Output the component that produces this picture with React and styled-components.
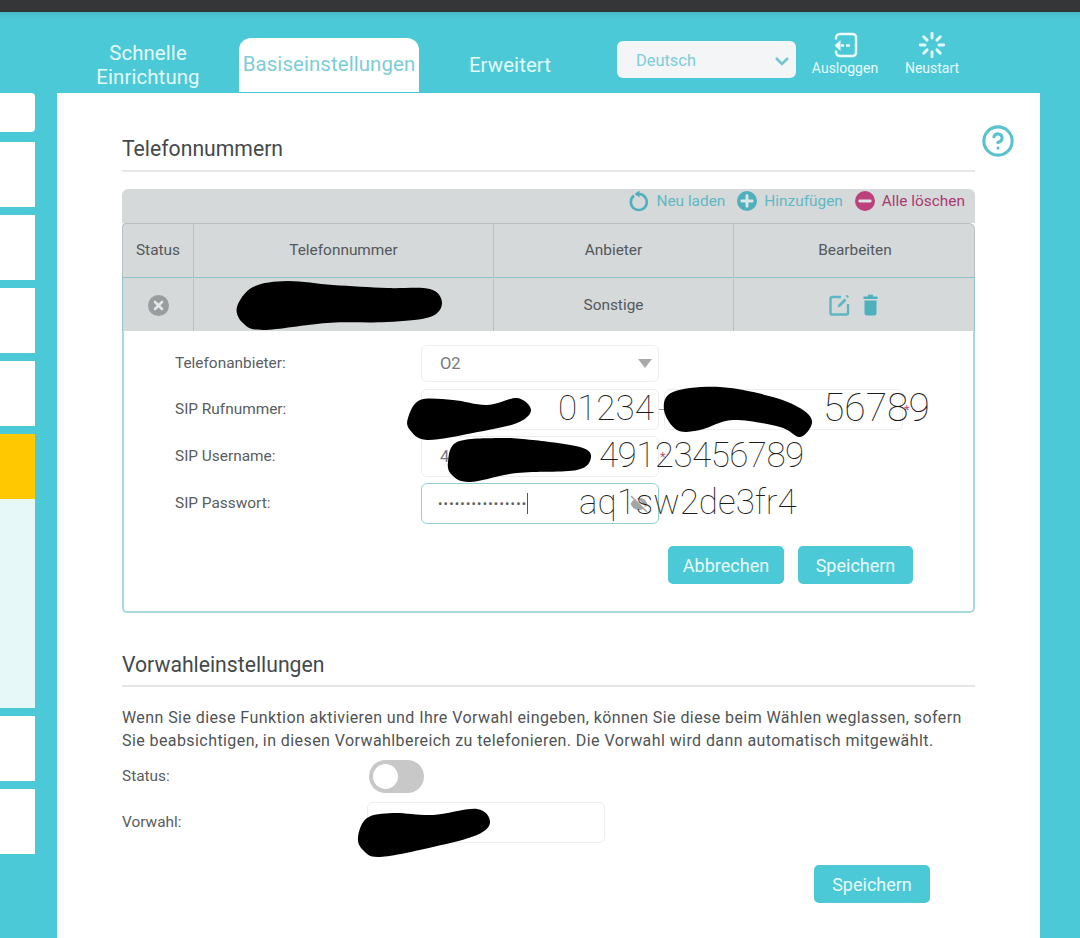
import React from 'react';
import styled, { createGlobalStyle } from 'styled-components';
import { Loader, CircleHelp, EyeOff } from 'lucide-react';

const teal = '#4cc9d6';

const GlobalStyle = createGlobalStyle`
  html, body {
    margin: 0;
    padding: 0;
    height: 938px;
    overflow: hidden;
    background: ${teal};
    font-family: "Roboto", "Liberation Sans", sans-serif;
  }
`;

const Page = styled.div`
  position: relative;
  width: 1080px;
  height: 938px;
  overflow: hidden;
  background: ${teal};
`;

const TopStrip = styled.div`
  height: 12px;
  background: #343638;
`;

const Nav = styled.nav`
  display: flex;
  align-items: flex-end;
  height: 80px;
  padding-left: 88px;
  background: linear-gradient(#46bdca 0, ${teal} 8px);
`;

const NavItem = styled.div`
  width: ${props => props.$width}px;
  margin-right: ${props => props.$after || 0}px;
  height: 54px;
  display: flex;
  align-items: center;
  justify-content: center;
  text-align: center;
  font-size: 20.4px;
  line-height: 24px;
  letter-spacing: 0.1px;
  color: ${props => (props.$active ? '#7ccdd6' : '#e4fafb')};
  background: ${props => (props.$active ? '#fff' : 'transparent')};
  border-radius: ${props => (props.$active ? '12px 12px 0 0' : '0')};
  padding-bottom: ${props => (props.$active ? 2 : 0)}px;
  box-sizing: border-box;
`;

const LanguageSelect = styled.div`
  align-self: flex-start;
  box-sizing: border-box;
  width: 179px;
  height: 37px;
  margin: 29px 4px 0 16px;
  padding: 2px 6px 0 19px;
  display: flex;
  align-items: center;
  justify-content: space-between;
  border-radius: 6px;
  background: #f3f5f6;
  color: #7ccdd6;
  font-size: 16.4px;
`;

const HeaderAction = styled.div`
  align-self: flex-start;
  width: ${props => props.$width}px;
  margin-top: 19px;
  display: flex;
  flex-direction: column;
  align-items: center;
  color: #e8fbfc;
  font-size: 14px;
  line-height: 18px;
  svg { display: block; height: 28px; }
`;

const Body = styled.div`
  display: flex;
  align-items: flex-start;
  column-gap: 22px;
  padding-top: 1px;
`;

const Sidebar = styled.aside`
  width: 35px;
  display: flex;
  flex-direction: column;
  row-gap: 8px;
`;

const SideItem = styled.div`
  height: ${props => props.$height || 65}px;
  background: ${props => props.$color || '#fff'};
  margin-bottom: ${props => props.$after || 0}px;
  border-radius: ${props => props.$radius || 0};
`;

const SideGroup = styled.div`
  display: flex;
  flex-direction: column;
`;

const Panel = styled.main`
  box-sizing: border-box;
  width: 983px;
  height: 845px;
  padding: 0 65px;
  background: #fff;
`;

const SectionTitle = styled.h2`
  box-sizing: border-box;
  height: ${props => props.$height}px;
  margin: 0;
  padding-bottom: ${props => props.$gap}px;
  display: flex;
  align-items: flex-end;
  border-bottom: 2px solid #e6e8e8;
  font-size: 21.2px;
  font-weight: 400;
  line-height: 26px;
  color: #45494c;
`;

const HelpIcon = styled.div`
  position: absolute;
  left: 981px;
  top: 124px;
  color: #58c2cd;
`;

const Toolbar = styled.div`
  margin-top: 17px;
  height: 34px;
  padding: 0 10px 10px 0;
  box-sizing: border-box;
  display: flex;
  align-items: center;
  justify-content: flex-end;
  background: #d5d9da;
  border-radius: 6px 6px 0 0;
`;

const ToolAction = styled.span`
  display: flex;
  align-items: center;
  column-gap: 7px;
  margin-left: 12px;
  font-size: 15.4px;
  color: ${props => props.$color};
`;

const TableRow = styled.div`
  display: grid;
  grid-template-columns: 71px 300px 240px 242px;
  height: 54px;
  box-sizing: border-box;
  padding: ${props => (props.$selected ? '1px 0 0' : '0')};
  background: #d5d9da;
  border-top: 1px solid ${props => (props.$selected ? '#8fc3ca' : '#b8c0c2')};
  border-left: 1px solid ${props => (props.$selected ? '#8fc3ca' : '#b8c0c2')};
  border-right: 1px solid ${props => (props.$selected ? '#8fc3ca' : '#b8c0c2')};
  border-radius: ${props => (props.$selected ? '0' : '4px 6px 0 0')};
`;

const Cell = styled.div`
  display: flex;
  align-items: center;
  justify-content: center;
  column-gap: 13px;
  padding-right: ${props => props.$shift || 0}px;
  padding-bottom: ${props => (props.$head ? 2 : 0)}px;
  font-size: 15.4px;
  color: #53585b;
  border-right: 1px solid #b8c0c2;
  &:last-child { border-right: 0; }
`;

const EditBox = styled.div`
  box-sizing: border-box;
  height: 282px;
  padding: 14px 60px 0 51px;
  border: 2px solid #a6d8de;
  border-top: 0;
  border-radius: 0 0 5px 5px;
`;

const FormRow = styled.div`
  display: flex;
  align-items: center;
  height: ${props => props.$height || 41}px;
  margin-bottom: ${props => props.$after || 6}px;
`;

const FieldLabel = styled.label`
  width: ${props => props.$width || 246}px;
  flex-shrink: 0;
  padding-bottom: 2px;
  font-size: 15.4px;
  color: #595d60;
`;

const Field = styled.div`
  position: relative;
  box-sizing: border-box;
  width: ${props => props.$width || 238}px;
  height: 100%;
  padding: 0 18px;
  display: flex;
  align-items: center;
  justify-content: space-between;
  background: #fff;
  border: 1px solid ${props => (props.$focus ? '#8fd0d8' : '#eceeee')};
  border-radius: 6px;
  color: #77797b;
  font-size: 16.5px;
`;

const Dash = styled.span`
  width: 5px;
  height: 1px;
  background: #999;
`;

const Required = styled.span`
  margin-left: 1px;
  color: #b9527f;
  font-size: 13px;
  line-height: 13px;
`;

const Dots = styled.span`
  margin-left: -2px;
  letter-spacing: 1.2px;
  font-size: 13px;
  color: #5c5c5c;
  border-right: 1.5px solid #555;
  line-height: 21px;
`;

const Arrow = styled.span`
  width: 0;
  height: 0;
  margin-right: -12px;
  border-left: 7px solid transparent;
  border-right: 7px solid transparent;
  border-top: 9px solid #a9a9a9;
`;

const ButtonRow = styled.div`
  display: flex;
  justify-content: flex-end;
  column-gap: 14px;
  margin-top: ${props => props.$top || 0}px;
  margin-right: ${props => props.$right || 0}px;
`;

const Button = styled.button`
  width: ${props => props.$width || 115}px;
  height: 38px;
  padding: 0;
  border: 0;
  border-radius: 5px;
  background: ${teal};
  color: #e8fbfc;
  font-family: inherit;
  font-size: 18px;
`;

const Paragraph = styled.p`
  margin: 19px 0 0;
  font-size: 16px;
  line-height: 23px;
  letter-spacing: 0.42px;
  color: #4f5356;
`;

const PlainRow = styled.div`
  display: flex;
  align-items: center;
  height: ${props => props.$height}px;
  margin-top: ${props => props.$top}px;
`;

const Switch = styled.div`
  box-sizing: border-box;
  width: 55px;
  height: 33px;
  margin-left: 2px;
  padding: 4px;
  border-radius: 17px;
  background: #c8c8c8;
  &::before {
    content: '';
    display: block;
    width: 25px;
    height: 25px;
    border-radius: 50%;
    background: #fff;
  }
`;

/* Hand annotations painted on top of the screenshot */
const Overlay = styled.svg`
  position: absolute;
  left: 0;
  top: 0;
  pointer-events: none;
`;

const Scrawl = styled.span`
  position: absolute;
  left: ${props => props.$x}px;
  top: ${props => props.$y}px;
  font-size: ${props => props.$size || 35}px;
  font-weight: 100;
  line-height: 40px;
  letter-spacing: ${props => props.$spacing || 0}px;
  color: #1c1c1c;
  white-space: nowrap;
`;

const smooth = points => {
  const n = points.length;
  let d = `M${points[0][0]} ${points[0][1]}`;
  for (let i = 0; i < n; i++) {
    const p0 = points[(i - 1 + n) % n];
    const p1 = points[i];
    const p2 = points[(i + 1) % n];
    const p3 = points[(i + 2) % n];
    const c1 = [p1[0] + (p2[0] - p0[0]) / 6, p1[1] + (p2[1] - p0[1]) / 6];
    const c2 = [p2[0] - (p3[0] - p1[0]) / 6, p2[1] - (p3[1] - p1[1]) / 6];
    d += `C${c1[0]} ${c1[1]} ${c2[0]} ${c2[1]} ${p2[0]} ${p2[1]}`;
  }
  return d + 'Z';
};

const blots = [
  [[237, 307], [253, 287], [287, 281], [333, 285], [387, 288], [430, 289], [442, 303], [430, 317], [387, 322], [327, 323], [263, 330], [243, 323]],
  [[408, 418], [420, 400], [453, 400], [487, 405], [517, 398], [531, 410], [517, 423], [473, 433], [427, 440], [410, 430]],
  [[448, 462], [457, 442], [500, 438], [533, 440], [580, 447], [591, 457], [577, 470], [517, 473], [470, 482], [452, 475]],
  [[664, 410], [673, 392], [720, 387], [773, 397], [803, 410], [812, 423], [800, 437], [780, 427], [733, 420], [700, 430], [677, 430]],
  [[358, 837], [367, 818], [393, 813], [433, 815], [477, 809], [490, 822], [477, 835], [433, 847], [380, 857], [363, 850]],
];

const RefreshIcon = () => (
  <svg width="20" height="22" viewBox="0 0 20 22" fill="none">
    <path d="M5 5.600a8 8 0 1 0 5-1.600" stroke="#4fb0bd" strokeWidth="2.600" />
    <path d="M10.500 0.500v7l-5-3.500z" fill="#4fb0bd" />
  </svg>
);

const RoundIcon = ({ color, plus }) => (
  <svg width="20" height="20" viewBox="0 0 21 21">
    <circle cx="10.500" cy="10.500" r="10.500" fill={color} />
    <path d={plus ? 'M10.500 5v11M5 10.500h11' : 'M5 10.500h11'} stroke="#dbe6e8" strokeWidth="3" strokeLinecap="round" />
  </svg>
);

const StatusIcon = () => (
  <svg width="21" height="21" viewBox="0 0 21 21">
    <circle cx="10.500" cy="10.500" r="10.500" fill="#9a9d9f" />
    <path d="M7 7l7 7M14 7l-7 7" stroke="#e4e6e7" strokeWidth="2.600" strokeLinecap="round" />
  </svg>
);

const EditIcon = () => (
  <svg width="21" height="22" viewBox="0 0 21 22" fill="none">
    <path d="M12 3H3A1.500 1.500 0 0 0 1.500 4.500V19A1.500 1.500 0 0 0 3 20.500H17.500A1.500 1.500 0 0 0 19 19V10" stroke="#5db6c2" strokeWidth="2.400" />
    <path d="M8.500 13.500l1-3 6-6 2 2-6 6z" fill="#5db6c2" />
    <path d="M18 0.800l2 2-1.300 1.300-2-2z" fill="#5db6c2" />
  </svg>
);

const TrashIcon = () => (
  <svg width="15" height="22" viewBox="0 0 15 22">
    <path d="M0.500 2.500h14V5H0.500zM5 0.800h5v2H5z" fill="#4fb0bd" />
    <path d="M1.500 6.500h12V19a2.500 2.500 0 0 1-2.500 2.500H4A2.500 2.500 0 0 1 1.500 19z" fill="#4fb0bd" />
  </svg>
);

const LogoutIcon = () => (
  <svg width="25" height="28" viewBox="0 0 25 28" fill="none">
    <path d="M3 8.500V7a4 4 0 0 1 4-4h13a3.500 3.500 0 0 1 3 3v16a3.500 3.500 0 0 1-3 3H7a4 4 0 0 1-4-4v-1.500" stroke="#eefcfd" strokeWidth="2.400" />
    <path d="M1.500 14.500l6-5.500v11z" fill="#eefcfd" />
    <path d="M8 14.500h3M13 14.500h4" stroke="#eefcfd" strokeWidth="2.400" />
  </svg>
);

const Chevron = () => (
  <svg width="16" height="10" viewBox="0 0 16 10" fill="none">
    <path d="M2 2l6 6 6-6" stroke="#73c6d0" strokeWidth="2.600" />
  </svg>
);

export default function App() {
  return (
    <Page>
      <GlobalStyle />
      <TopStrip />
      <Nav>
        <NavItem $width={120} $after={31}>Schnelle<br />Einrichtung</NavItem>
        <NavItem $width={180} $active>Basiseinstellungen</NavItem>
        <NavItem $width={182}>Erweitert</NavItem>
        <LanguageSelect>Deutsch<Chevron /></LanguageSelect>
        <HeaderAction $width={90}><LogoutIcon />Ausloggen</HeaderAction>
        <HeaderAction $width={84}><Loader size={28} strokeWidth={2.5} />Neustart</HeaderAction>
      </Nav>
      <Body>
        <Sidebar>
          <SideItem $height={39} $after={2} $radius="0 4px 4px 0" />
          <SideItem />
          <SideItem />
          <SideItem />
          <SideItem />
          <SideGroup>
            <SideItem $color="#ffc800" />
            <SideItem $height={209} $color="#e7f8f9" />
          </SideGroup>
          <SideItem />
          <SideItem />
        </Sidebar>
        <Panel>
          <SectionTitle $height={79} $gap={8}>Telefonnummern</SectionTitle>
          <Toolbar>
            <ToolAction $color="#5fb8c4"><RefreshIcon />Neu laden</ToolAction>
            <ToolAction $color="#5fb8c4"><RoundIcon color="#4fb0bd" plus />Hinzufügen</ToolAction>
            <ToolAction $color="#a93a6f"><RoundIcon color="#bd3f7c" />Alle löschen</ToolAction>
          </Toolbar>
          <TableRow>
            <Cell $head>Status</Cell>
            <Cell $head>Telefonnummer</Cell>
            <Cell $head>Anbieter</Cell>
            <Cell $head>Bearbeiten</Cell>
          </TableRow>
          <TableRow $selected>
            <Cell><StatusIcon /></Cell>
            <Cell />
            <Cell>Sonstige</Cell>
            <Cell $shift={3}><EditIcon /><TrashIcon /></Cell>
          </TableRow>
          <EditBox>
            <FormRow $height={37} $after={7}>
              <FieldLabel>Telefonanbieter:</FieldLabel>
              <Field>O2<Arrow /></Field>
            </FormRow>
            <FormRow>
              <FieldLabel>SIP Rufnummer:</FieldLabel>
              <Field />
              <Dash />
              <Field $width={239} />
              <Required>*</Required>
            </FormRow>
            <FormRow>
              <FieldLabel>SIP Username:</FieldLabel>
              <Field>4</Field>
              <Required>*</Required>
            </FormRow>
            <FormRow $after={22}>
              <FieldLabel>SIP Passwort:</FieldLabel>
              <Field $focus>
                <Dots>••••••••••••••••</Dots>
                <EyeOff size={18} color="#a5a5a5" fill="#a5a5a5" style={{ marginRight: -8 }} />
              </Field>
            </FormRow>
            <ButtonRow>
              <Button $width={116}>Abbrechen</Button>
              <Button>Speichern</Button>
            </ButtonRow>
          </EditBox>
          <SectionTitle $height={74} $gap={7}>Vorwahleinstellungen</SectionTitle>
          <Paragraph>
            Wenn Sie diese Funktion aktivieren und Ihre Vorwahl eingeben, können Sie diese beim Wählen weglassen, sofern
            <br />
            Sie beabsichtigen, in diesen Vorwahlbereich zu telefonieren. Die Vorwahl wird dann automatisch mitgewählt.
          </Paragraph>
          <PlainRow $height={33} $top={8}>
            <FieldLabel $width={245}>Status:</FieldLabel>
            <Switch />
          </PlainRow>
          <PlainRow $height={41} $top={9}>
            <FieldLabel $width={245}>Vorwahl:</FieldLabel>
            <Field />
          </PlainRow>
          <ButtonRow $top={22} $right={45}>
            <Button $width={116}>Speichern</Button>
          </ButtonRow>
        </Panel>
      </Body>
      <HelpIcon><CircleHelp size={34} strokeWidth={2.2} /></HelpIcon>
      <Overlay width="1080" height="938" viewBox="0 0 1080 938">
        {blots.map((points, index) => (
          <path key={index} d={smooth(points)} fill="#000" />
        ))}
      </Overlay>
      <Scrawl $x={558} $y={389}>01234</Scrawl>
      <Scrawl $x={823} $y={388} $size={39}>56789</Scrawl>
      <Scrawl $x={599} $y={436} $spacing={-0.55}>49123456789</Scrawl>
      <Scrawl $x={579} $y={483}>aq1sw2de3fr4</Scrawl>
    </Page>
  );
}
